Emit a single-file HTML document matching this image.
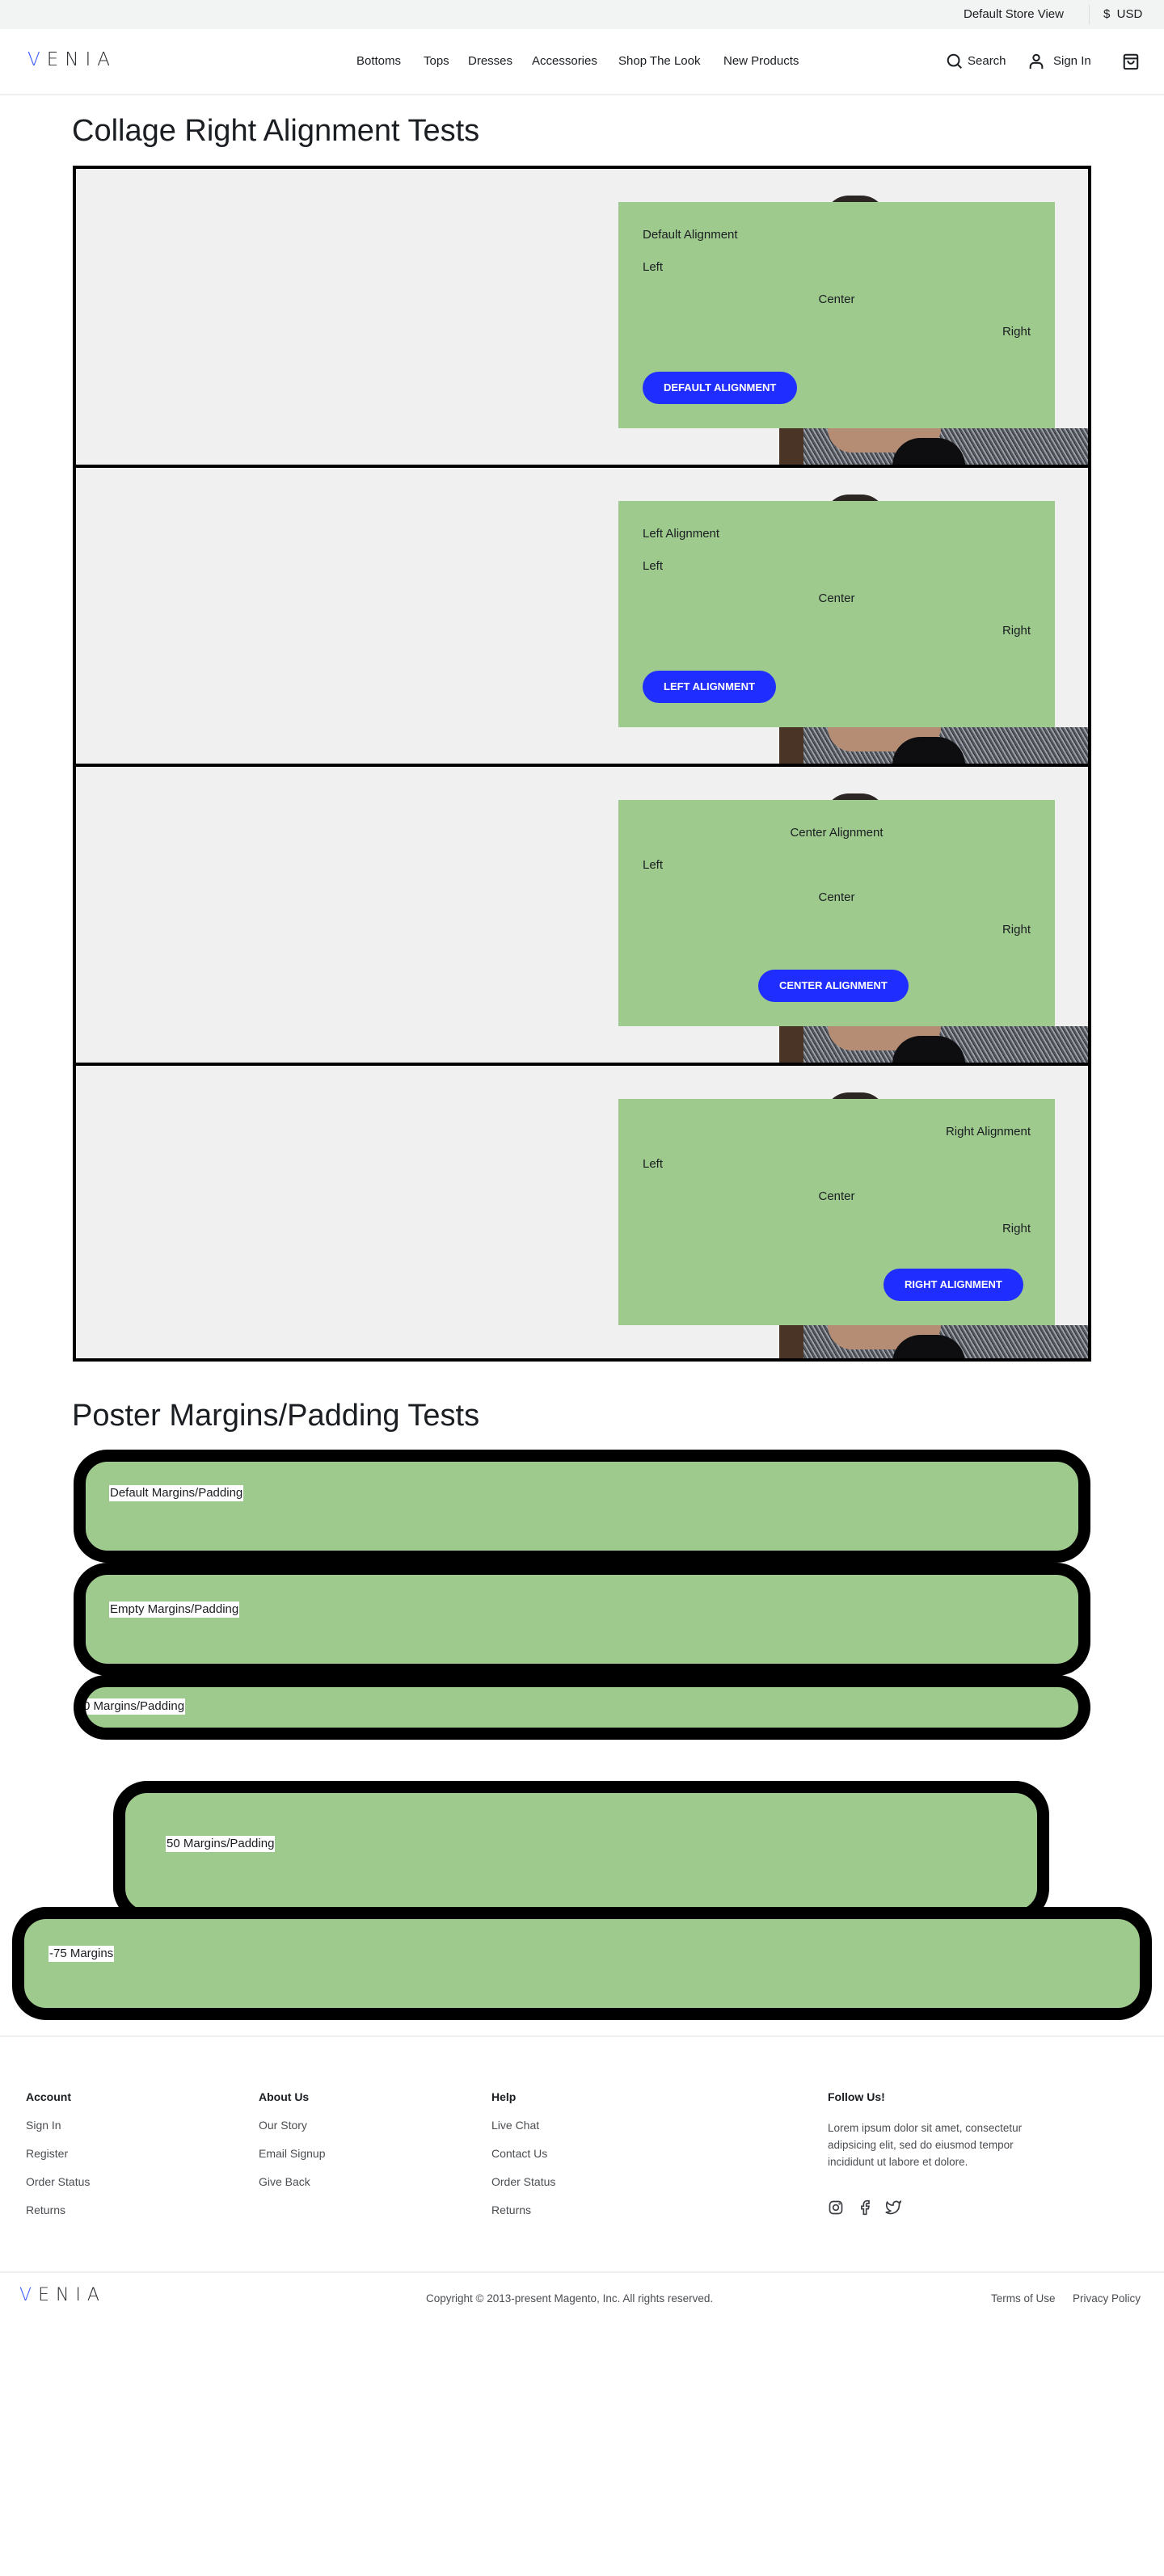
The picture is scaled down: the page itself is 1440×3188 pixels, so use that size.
<!DOCTYPE html>
<html><head><meta charset="utf-8"><style>
*{box-sizing:border-box;margin:0;padding:0}
body{width:1440px;height:3188px;position:relative;background:#fff;font-family:"Liberation Sans",sans-serif;color:#1a1d21;overflow:hidden}
.a{position:absolute;white-space:nowrap}
.top{left:0;top:0;width:1440px;height:36px;background:#f2f3f3}
.nav{font-size:15px;top:67px}
.box{position:absolute;left:90px;width:1260px;border:4px solid #000;background:#f0f0f0;overflow:hidden}
.panel{position:absolute;left:671px;top:41px;width:540px;height:280px;background:#9fca8e;font-size:15px}
.panel div{position:absolute;left:30px;right:30px}
.btn{position:absolute;top:210px;height:40px;border-radius:20px;background:#1f2dff;color:#fff;font-size:13px;font-weight:bold;line-height:40px;padding:0 26px}
.hair{position:absolute;left:926px;top:33px;width:76px;height:30px;border-radius:40px 40px 0 0;background:#2b2623}
.photo{position:absolute;left:870px;top:321px;width:390px;height:45px;background:repeating-linear-gradient(60deg,#55585f 0 2px,#9a9ea6 2px 4px,#33353a 4px 5px)}
.photo .hl{position:absolute;left:0;top:0;width:30px;height:45px;background:#4a3426}
.photo .sk{position:absolute;left:60px;top:0;width:140px;height:30px;background:#b58c74;border-radius:0 0 70px 70px}
.photo .bl{position:absolute;left:140px;top:12px;width:90px;height:35px;background:#0e0e10;border-radius:40px 40px 0 0}
.post{position:absolute;border:15px solid #000;border-radius:42px;background:#9fca8e;overflow:hidden}
.lab{position:absolute;background:#fff;font-size:15px;line-height:20px;padding:0 1px}
.fh{font-size:14px;font-weight:bold;top:2587px}
.fl{font-size:14px;color:#4a4d52}
.logo{font-weight:300;color:#2a2d31;font-family:"DejaVu Sans","Liberation Sans",sans-serif;font-stretch:condensed}
</style></head><body>
<div class="a top"></div>
<div class="a" style="left:1192px;top:9px;font-size:15px">Default Store View</div>
<div class="a" style="left:1347px;top:6px;width:1px;height:24px;background:#dcdcdc"></div>
<div class="a" style="left:1365px;top:9px;font-size:15px">$&nbsp; USD</div>
<div class="a" style="left:0;top:116px;width:1440px;height:2px;background:#f0f0f0"></div>
<div class="a logo" style="left:34px;top:61px;font-size:23px;letter-spacing:8px"><span style="color:#3d5afe">V</span>ENIA</div>
<div class="a nav" style="left:441px">Bottoms</div>
<div class="a nav" style="left:524px">Tops</div>
<div class="a nav" style="left:579px">Dresses</div>
<div class="a nav" style="left:658px">Accessories</div>
<div class="a nav" style="left:765px">Shop The Look</div>
<div class="a nav" style="left:895px">New Products</div>
<svg class="a" style="left:1170px;top:65px" width="22" height="22" viewBox="0 0 24 24" fill="none" stroke="#1a1d21" stroke-width="2.2"><circle cx="10.5" cy="10.5" r="7.5"/><path d="M16 16l5 5"/></svg>
<div class="a" style="left:1197px;top:67px;font-size:15px">Search</div>
<svg class="a" style="left:1271px;top:64px" width="22" height="24" viewBox="0 0 24 24" fill="none" stroke="#1a1d21" stroke-width="2.2"><circle cx="12" cy="7" r="4"/><path d="M4 22v-3a5 5 0 0 1 5-5h6a5 5 0 0 1 5 5v3"/></svg>
<div class="a" style="left:1303px;top:67px;font-size:15px">Sign In</div>
<svg class="a" style="left:1388px;top:64px" width="22" height="24" viewBox="0 0 24 24" fill="none" stroke="#1a1d21" stroke-width="2.2"><rect x="3" y="3" width="18" height="19" rx="2"/><path d="M3 8h18M8 11a4 4 0 0 0 8 0"/></svg>

<div class="a" style="left:89px;top:141px;font-size:38px">Collage Right Alignment Tests</div>

<div class="box" style="top:205px;height:374px"><div class="hair"></div><div class="photo"><div class="hl"></div><div class="sk"></div><div class="bl"></div></div>
<div class="panel"><div style="top:32px">Default Alignment</div><div style="top:72px">Left</div><div style="top:112px;text-align:center">Center</div><div style="top:152px;text-align:right">Right</div><span class="btn" style="left:30px">DEFAULT ALIGNMENT</span></div></div>
<div class="box" style="top:575px;height:374px"><div class="hair"></div><div class="photo"><div class="hl"></div><div class="sk"></div><div class="bl"></div></div>
<div class="panel"><div style="top:32px">Left Alignment</div><div style="top:72px">Left</div><div style="top:112px;text-align:center">Center</div><div style="top:152px;text-align:right">Right</div><span class="btn" style="left:30px">LEFT ALIGNMENT</span></div></div>
<div class="box" style="top:945px;height:374px"><div class="hair"></div><div class="photo"><div class="hl"></div><div class="sk"></div><div class="bl"></div></div>
<div class="panel"><div style="top:32px;text-align:center">Center Alignment</div><div style="top:72px">Left</div><div style="top:112px;text-align:center">Center</div><div style="top:152px;text-align:right">Right</div><span class="btn" style="left:173px">CENTER ALIGNMENT</span></div></div>
<div class="box" style="top:1315px;height:370px"><div class="hair"></div><div class="photo"><div class="hl"></div><div class="sk"></div><div class="bl"></div></div>
<div class="panel"><div style="top:32px;text-align:right">Right Alignment</div><div style="top:72px">Left</div><div style="top:112px;text-align:center">Center</div><div style="top:152px;text-align:right">Right</div><span class="btn" style="left:328px">RIGHT ALIGNMENT</span></div></div>

<div class="a" style="left:89px;top:1731px;font-size:38px">Poster Margins/Padding Tests</div>

<div class="post" style="left:91px;top:1794px;width:1258px;height:140px"></div>
<div class="lab a" style="left:135px;top:1838px">Default Margins/Padding</div>
<div class="post" style="left:91px;top:1934px;width:1258px;height:140px"></div>
<div class="lab a" style="left:135px;top:1982px">Empty Margins/Padding</div>
<div class="post" style="left:91px;top:2073px;width:1258px;height:80px"><div class="lab" style="left:-4px;top:14px">0 Margins/Padding</div></div>
<div class="post" style="left:140px;top:2204px;width:1158px;height:175px"></div>
<div class="lab a" style="left:205px;top:2272px">50 Margins/Padding</div>
<div class="post" style="left:15px;top:2360px;width:1410px;height:140px"></div>
<div class="lab a" style="left:60px;top:2408px">-75 Margins</div>

<div class="a" style="left:0;top:2519px;width:1440px;height:2px;background:#f0f0f0"></div>
<div class="a fh" style="left:32px">Account</div>
<div class="a fh" style="left:320px">About Us</div>
<div class="a fh" style="left:608px">Help</div>
<div class="a fh" style="left:1024px">Follow Us!</div>
<div class="a fl" style="left:32px;top:2622px">Sign In</div>
<div class="a fl" style="left:32px;top:2657px">Register</div>
<div class="a fl" style="left:32px;top:2692px">Order Status</div>
<div class="a fl" style="left:32px;top:2727px">Returns</div>
<div class="a fl" style="left:320px;top:2622px">Our Story</div>
<div class="a fl" style="left:320px;top:2657px">Email Signup</div>
<div class="a fl" style="left:320px;top:2692px">Give Back</div>
<div class="a fl" style="left:608px;top:2622px">Live Chat</div>
<div class="a fl" style="left:608px;top:2657px">Contact Us</div>
<div class="a fl" style="left:608px;top:2692px">Order Status</div>
<div class="a fl" style="left:608px;top:2727px">Returns</div>
<div class="a fl" style="left:1024px;top:2623px;font-size:13.5px;line-height:21px;white-space:normal;width:250px">Lorem ipsum dolor sit amet, consectetur adipsicing elit, sed do eiusmod tempor incididunt ut labore et dolore.</div>
<svg class="a" style="left:1024px;top:2722px" width="20" height="20" viewBox="0 0 24 24" fill="none" stroke="#3a3d42" stroke-width="2"><rect x="3" y="3" width="18" height="18" rx="5"/><circle cx="12" cy="12" r="4"/><circle cx="17.5" cy="6.5" r=".5"/></svg>
<svg class="a" style="left:1060px;top:2722px" width="20" height="20" viewBox="0 0 24 24" fill="none" stroke="#3a3d42" stroke-width="2"><path d="M18 2h-3a5 5 0 0 0-5 5v3H7v4h3v8h4v-8h3l1-4h-4V7a1 1 0 0 1 1-1h3z"/></svg>
<svg class="a" style="left:1095px;top:2722px" width="20" height="20" viewBox="0 0 24 24" fill="none" stroke="#3a3d42" stroke-width="2"><path d="M23 3a10.9 10.9 0 0 1-3.1 1.5 4.5 4.5 0 0 0-7.9 3v1A10.7 10.7 0 0 1 3 4s-4 9 5 13a11.6 11.6 0 0 1-7 2c9 5 20 0 20-11.5a4.5 4.5 0 0 0-.1-.8A7.7 7.7 0 0 0 23 3z"/></svg>
<div class="a" style="left:0;top:2811px;width:1440px;height:2px;background:#f0f0f0"></div>
<div class="a logo" style="left:24px;top:2828px;font-size:22px;letter-spacing:8px"><span style="color:#3d5afe">V</span>ENIA</div>
<div class="a" style="left:527px;top:2837px;font-size:13.5px;color:#4a4d52">Copyright © 2013-present Magento, Inc. All rights reserved.</div>
<div class="a" style="left:1226px;top:2837px;font-size:13.5px;color:#4a4d52">Terms of Use</div>
<div class="a" style="left:1327px;top:2837px;font-size:13.5px;color:#4a4d52">Privacy Policy</div>
</body></html>
